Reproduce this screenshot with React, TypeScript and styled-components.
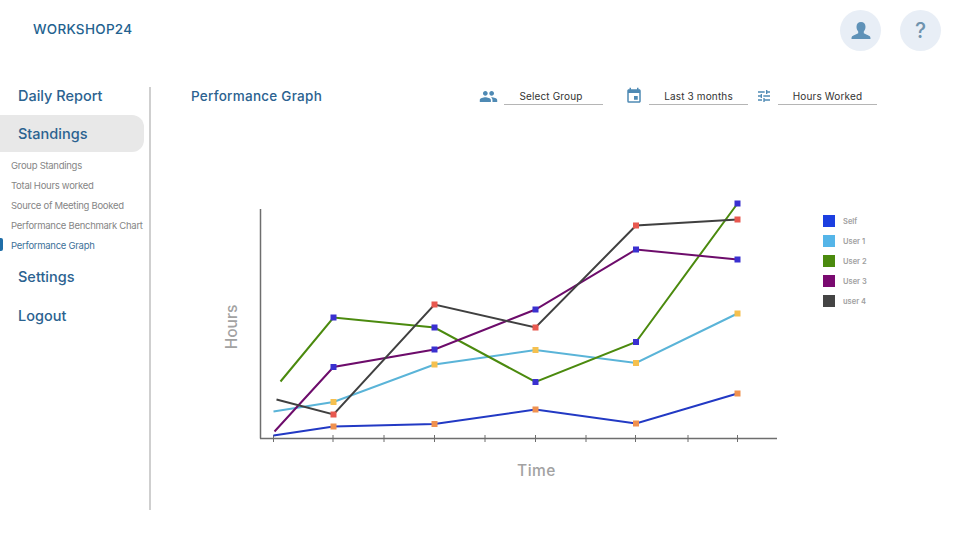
import React from 'react';
import styled, { createGlobalStyle } from 'styled-components';
import { MdPeople, MdEvent, MdTune } from 'react-icons/md';

interface Series {
  name: string;
  color: string;
  marker: string;
  points: number[][];
}

const GlobalStyle = createGlobalStyle`
  html, body {
    margin: 0;
    padding: 0;
    background: #fff;
    font-family: Inter, "Open Sans", sans-serif;
  }
`;

const Page = styled.div`
  width: 960px;
  height: 540px;
  overflow: hidden;
`;

const Header = styled.header`
  height: 87px;
  box-sizing: border-box;
  display: flex;
  justify-content: space-between;
  align-items: flex-start;
  padding: 10px 19px 0 33px;
`;

const Logo = styled.div`
  margin-top: 11px;
  font-size: 13.5px;
  line-height: 17px;
  font-weight: 500;
  letter-spacing: 0.3px;
  color: #23628f;
`;

const HeaderActions = styled.div`
  display: flex;
  gap: 19px;
`;

const RoundButton = styled.div`
  width: 41px;
  height: 41px;
  border-radius: 50%;
  background: #e8eef6;
  display: flex;
  align-items: center;
  justify-content: center;
  color: #6f93ae;
  font-size: 21px;
  font-weight: 500;
`;

const Body = styled.div`
  display: flex;
`;

const Sidebar = styled.nav`
  width: 149px;
  height: 423px;
  border-right: 2px solid #cfcfcf;
`;

const NavItem = styled.div<{ $active?: boolean; $top?: number }>`
  width: 144px;
  height: 37px;
  margin-top: ${p => p.$top ?? 0}px;
  box-sizing: border-box;
  padding-left: 18px;
  display: flex;
  align-items: center;
  font-size: 14.5px;
  font-weight: 500;
  color: #2b6290;
  background: ${p => (p.$active ? '#e8e8e8' : 'transparent')};
  border-radius: 0 12px 12px 0;
`;

const SubList = styled.div`
  padding: 3px 0;
`;

const SubItem = styled.div<{ $active?: boolean }>`
  position: relative;
  height: 20px;
  padding-left: 11px;
  display: flex;
  align-items: center;
  font-size: 9.5px;
  letter-spacing: -0.28px;
  white-space: nowrap;
  color: ${p => (p.$active ? '#3c7199' : '#858585')};

  ${p =>
    p.$active &&
    `&::before {
      content: '';
      position: absolute;
      left: 0;
      top: 3px;
      width: 3px;
      height: 13px;
      border-radius: 0 2px 2px 0;
      background: #1f6ea8;
    }`}
`;

const Main = styled.main`
  flex: 1;
`;

const Toolbar = styled.div`
  height: 20px;
  margin-top: -1px;
  display: flex;
  align-items: center;
  padding-left: 40px;
`;

const Title = styled.h1`
  margin: 0;
  width: 288px;
  font-size: 13.5px;
  font-weight: 500;
  letter-spacing: 0.25px;
  color: #2b6290;
  white-space: nowrap;
`;

const Filter = styled.div<{ $gap: number; $space: number }>`
  display: flex;
  align-items: center;
  gap: ${p => p.$gap}px;
  margin-right: ${p => p.$space}px;
  color: #4f8ab4;
`;

const FilterValue = styled.div<{ $inset?: number }>`
  width: 99px;
  height: 17px;
  box-sizing: border-box;
  padding-right: ${p => p.$inset ?? 0}px;
  border-bottom: 1px solid #b5b5b5;
  text-align: center;
  font-size: 10px;
  letter-spacing: 0.15px;
  line-height: 17px;
  color: #333;
`;

const ChartRow = styled.div`
  display: flex;
  margin-top: 89px;
  padding-left: 69px;
`;

const ChartSvg = styled.svg`
  display: block;
  width: 570px;
  height: 290px;
  flex: none;
`;

const AxisLabel = styled.text<{ $spacing?: number }>`
  font-size: 15.5px;
  font-weight: 500;
  letter-spacing: ${p => p.$spacing ?? 0}px;
  fill: #a2a2a2;
`;

const Legend = styled.div`
  margin: 16px 0 0 33px;
`;

const LegendItem = styled.div`
  height: 20px;
  display: flex;
  align-items: center;
  gap: 8px;
  font-size: 7.5px;
  font-weight: 600;
  color: #a0a0a0;
`;

const Swatch = styled.span<{ $color: string }>`
  width: 12px;
  height: 12px;
  background: ${p => p.$color};
`;

const series: Series[] = [
  {
    name: 'Self',
    color: '#2239c4',
    marker: '#f0914f',
    points: [[273.5, 435.5], [333.5, 426.5], [434.5, 424], [535.5, 409.5], [636, 423.5], [737.5, 393.5]],
  },
  {
    name: 'User 1',
    color: '#5ab4d8',
    marker: '#f5c04f',
    points: [[273.5, 411.5], [333.5, 402], [434.5, 364.5], [535.5, 350], [636, 363], [737.5, 313.5]],
  },
  {
    name: 'User 2',
    color: '#4b8a0e',
    marker: '#3a30d0',
    points: [[280.5, 381.5], [333.5, 317.5], [434.5, 327.5], [535.5, 382], [636, 342], [737.5, 203.5]],
  },
  {
    name: 'User 3',
    color: '#6d0c6b',
    marker: '#3a30d0',
    points: [[274.5, 431.5], [333.5, 367], [434.5, 349.5], [535.5, 309.5], [636, 249.5], [737.5, 259.5]],
  },
  {
    name: 'user 4',
    color: '#404040',
    marker: '#e8584f',
    points: [[276.5, 399.5], [333.5, 414.5], [434.5, 304.5], [535.5, 327.5], [636, 225.5], [737.5, 219.5]],
  },
];

const legendColors = ['#1c3fe0', '#55b5e8', '#4b8a0e', '#7a0a70', '#444444'];

const ticks = [273.5, 333, 384, 434.5, 485, 535.5, 586, 635.5, 688, 737.5];

const subItems = [
  'Group Standings',
  'Total Hours worked',
  'Source of Meeting Booked',
  'Performance Benchmark Chart',
];

const App: React.FC = () => {
  return (
    <Page>
      <GlobalStyle />
      <Header>
        <Logo>WORKSHOP24</Logo>
        <HeaderActions>
          <RoundButton>
            <svg width="24" height="24" viewBox="0 0 24 24" fill="#5f92b8">
              <path d="M12 3c-2.800 0-4.500 2-4.500 4.800 0 2 .8 3.700 1.700 4.700v1.800c-1.800 1.400-4.500 1.600-6 3-.5.500-.7 1.300-.7 2.700h19c0-1.400-.2-2.200-.7-2.700-1.500-1.400-4.200-1.600-6-3v-1.800c.9-1 1.700-2.700 1.700-4.700C16.500 5 14.800 3 12 3z" />
            </svg>
          </RoundButton>
          <RoundButton>?</RoundButton>
        </HeaderActions>
      </Header>
      <Body>
        <Sidebar>
          <NavItem $top={-10}>Daily Report</NavItem>
          <NavItem $active $top={1}>Standings</NavItem>
          <SubList>
            {subItems.map(item => (
              <SubItem key={item}>{item}</SubItem>
            ))}
            <SubItem $active>Performance Graph</SubItem>
          </SubList>
          <NavItem>Settings</NavItem>
          <NavItem $top={2}>Logout</NavItem>
        </Sidebar>
        <Main>
          <Toolbar>
            <Title>Performance Graph</Title>
            <Filter $gap={6} $space={22}>
              <MdPeople size={19} />
              <FilterValue $inset={5}>Select Group</FilterValue>
            </Filter>
            <Filter $gap={6} $space={8}>
              <MdEvent size={18} />
              <FilterValue>Last 3 months</FilterValue>
            </Filter>
            <Filter $gap={6} $space={0}>
              <MdTune size={16} />
              <FilterValue>Hours Worked</FilterValue>
            </Filter>
          </Toolbar>
          <ChartRow>
            <ChartSvg viewBox="220 195 570 290">
              <g stroke="#6e6e6e" fill="none">
                <path d="M260.5 209V438.5" strokeWidth="1.5" />
                <path d="M260 438.5H777" strokeWidth="1.5" />
                {ticks.map(x => (
                  <path key={x} d={`M${x} 435V442`} strokeWidth="1" />
                ))}
              </g>
              {series.map(s => (
                <g key={s.name}>
                  <polyline
                    points={s.points.map(p => p.join(',')).join(' ')}
                    fill="none"
                    stroke={s.color}
                    strokeWidth="2"
                  />
                  {s.points.slice(1).map(([x, y]) => (
                    <rect key={x} x={x - 3} y={y - 3} width="6" height="6" fill={s.marker} />
                  ))}
                </g>
              ))}
              <AxisLabel x="536.5" y="476" textAnchor="middle" $spacing={0.5}>Time</AxisLabel>
              <AxisLabel transform="translate(236.5 327) rotate(-90)" textAnchor="middle">Hours</AxisLabel>
            </ChartSvg>
            <Legend>
              {series.map((s, i) => (
                <LegendItem key={s.name}>
                  <Swatch $color={legendColors[i]} />
                  {s.name}
                </LegendItem>
              ))}
            </Legend>
          </ChartRow>
        </Main>
      </Body>
    </Page>
  );
};

export default App;
